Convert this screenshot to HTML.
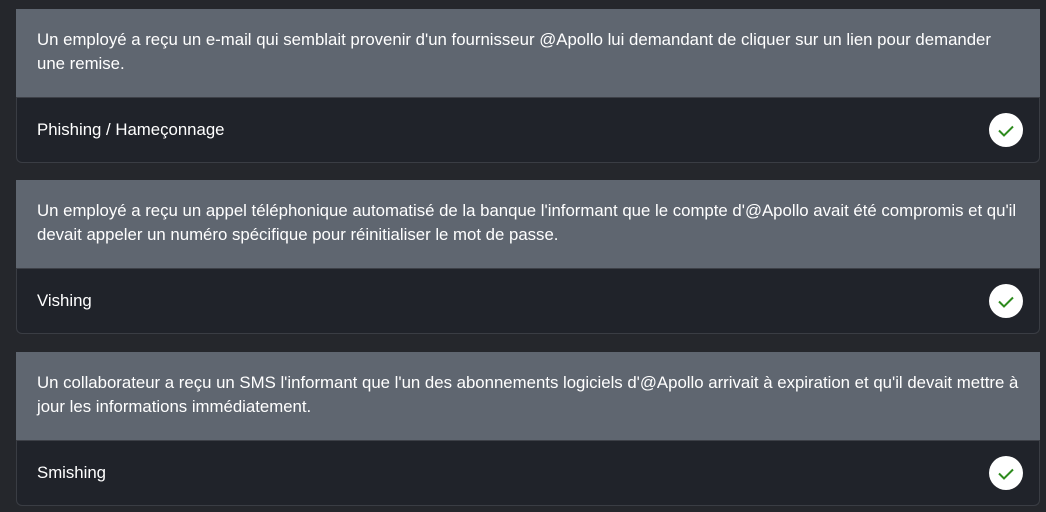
<!DOCTYPE html>
<html><head><meta charset="utf-8"><style>
body{margin:0;background:#25272c;width:1046px;height:512px;overflow:hidden;font-family:"Liberation Sans",Arial,sans-serif;color:#fff}
.card{position:absolute;left:16px;width:1024px;}
.q{background:#5f6670;height:88px;box-sizing:border-box;padding:19px 12px 0 21px;font-size:16.8px;line-height:24px}
.a{background:#20232a;height:66px;border:1px solid #3a3d44;border-top:1px solid #3d4047;border-radius:0 0 6px 6px;box-sizing:border-box;position:relative;font-size:16.8px}
.a span{position:absolute;left:20px;top:22px}
.c{position:absolute;right:16px;top:15px;width:34px;height:34px;border-radius:50%;background:#fff}
.c svg{position:absolute;left:0;top:0}
</style></head><body>
<div class="card" style="top:9px"><div class="q">Un employé a reçu un e-mail qui semblait provenir d'un fournisseur @Apollo lui demandant de cliquer sur un lien pour demander<br>une remise.</div><div class="a"><span>Phishing / Hameçonnage</span><div class="c"><svg width="34" height="34"><path d="M10 17.5l5 5 9-9" fill="none" stroke="#2e8b1e" stroke-width="2"/></svg></div></div></div>
<div class="card" style="top:180px"><div class="q">Un employé a reçu un appel téléphonique automatisé de la banque l'informant que le compte d'@Apollo avait été compromis et qu'il<br>devait appeler un numéro spécifique pour réinitialiser le mot de passe.</div><div class="a"><span>Vishing</span><div class="c"><svg width="34" height="34"><path d="M10 17.5l5 5 9-9" fill="none" stroke="#2e8b1e" stroke-width="2"/></svg></div></div></div>
<div class="card" style="top:352px"><div class="q">Un collaborateur a reçu un SMS l'informant que l'un des abonnements logiciels d'@Apollo arrivait à expiration et qu'il devait mettre à<br>jour les informations immédiatement.</div><div class="a"><span>Smishing</span><div class="c"><svg width="34" height="34"><path d="M10 17.5l5 5 9-9" fill="none" stroke="#2e8b1e" stroke-width="2"/></svg></div></div></div>
</body></html>
